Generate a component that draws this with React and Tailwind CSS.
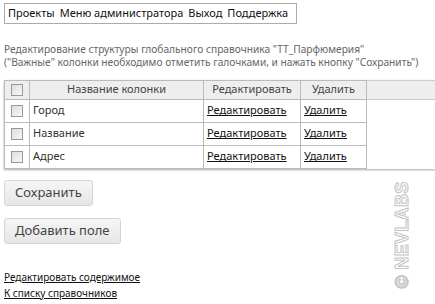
export default function App() {
  const rows = ['Город', 'Название', 'Адрес']
  return (
    <div className="relative h-[304px] w-[435px] overflow-hidden bg-white font-['Noto_Sans',sans-serif] text-[#333]">
      <div className="px-1 pt-[3px]">
        <nav className="flex w-[293px] items-center gap-[5px] whitespace-nowrap border border-[#aaa] px-[3px] py-[1px] text-[11px] text-[#111]">
          <span>Проекты</span>
          <span>Меню администратора</span>
          <span>Выход</span>
          <span>Поддержка</span>
        </nav>

        <div className="mt-[19px] whitespace-nowrap text-[10.2px] leading-[13px] text-[#666]">
          <p>Редактирование структуры глобального справочника "ТТ_Парфюмерия"</p>
          <p>("Важные" колонки необходимо отметить галочками, и нажать кнопку "Сохранить")</p>
        </div>

        <table className="mt-[11px] w-[431px] table-fixed border-collapse whitespace-nowrap text-[11px] shadow-[0_1px_2px_rgba(0,0,0,0.35)]">
          <thead>
            <tr className="h-[19px] bg-[#eeeeee] text-[#444]">
              <th className="w-[25px] border border-[#bbb] p-0">
                <Box />
              </th>
              <th className="w-[174px] border border-[#bbb] font-normal">Название колонки</th>
              <th className="w-[97px] border border-[#bbb] font-normal">Редактировать</th>
              <th className="w-[66px] border border-[#bbb] font-normal">Удалить</th>
              <th className="border-y border-[#ccc]"></th>
            </tr>
          </thead>
          <tbody>
            {rows.map((r) => (
              <tr key={r} className="h-[23px]">
                <td className="border border-[#bbb] p-0">
                  <Box />
                </td>
                <td className="border border-[#bbb] px-[3px]">{r}</td>
                <td className="border border-[#bbb] px-[3px]">
                  <a href="#" className="text-[#111] underline">Редактировать</a>
                </td>
                <td className="border border-[#bbb] px-[3px]">
                  <a href="#" className="text-[#111] underline">Удалить</a>
                </td>
                <td></td>
              </tr>
            ))}
          </tbody>
        </table>

        <div className="mt-[11px] flex flex-col items-start gap-[12px]">
          <Button>Сохранить</Button>
          <Button>Добавить поле</Button>
        </div>

        <div className="mt-[25px] flex flex-col text-[10px] leading-[16px]">
          <a href="#" className="w-fit text-[#111] underline">Редактировать содержимое</a>
          <a href="#" className="w-fit text-[#111] underline">К списку справочников</a>
        </div>
      </div>

      <div className="absolute left-[402px] top-[235px] -translate-x-1/2 -translate-y-1/2 -rotate-90 whitespace-nowrap font-['Liberation_Sans',sans-serif] text-[18px] font-bold tracking-[0.3px] text-transparent [-webkit-text-stroke:1px_#c4c4c4]">
        © NEVLABS
      </div>
    </div>
  )
}

function Box() {
  return (
    <div className="mx-auto h-[12px] w-[12px] border border-[#999] bg-gradient-to-br from-[#ddd] to-[#f8f8f8]"></div>
  )
}

function Button({ children }) {
  return (
    <button className="h-[26px] rounded-[3px] border border-[#d4d4d4] bg-gradient-to-b from-[#f6f6f6] to-[#e6e6e6] px-[10px] text-[13px] text-[#444]">
      {children}
    </button>
  )
}
